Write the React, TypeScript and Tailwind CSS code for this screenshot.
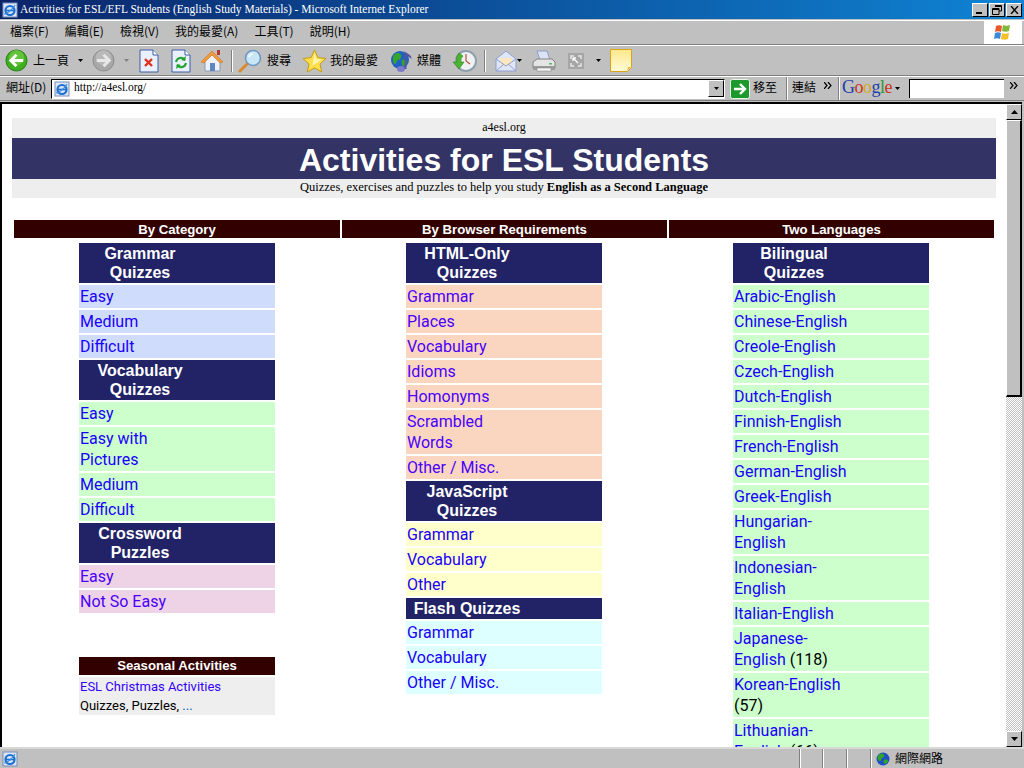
import type { ReactNode } from 'react';

const UI = "font-['Noto_Sans_CJK_TC','Liberation_Sans',sans-serif]";
const BODY = "font-['Roboto','Liberation_Sans',sans-serif]";
const ARIAL = "font-['Liberation_Sans',Arial,sans-serif]";
const SERIF = "font-['Liberation_Serif','Noto_Sans_CJK_TC',serif]";

type Row = { lines: string[]; suffix?: string; suffixOwnLine?: boolean; visited?: boolean };

const r = (text: string, extra?: Partial<Row>): Row => ({ lines: text.split('|'), ...extra });

function IeIcon({ size = 16 }: { size?: number }) {
  return (
    <svg width={size} height={size} viewBox="0 0 16 16">
      <rect x="1" y="1" width="14" height="14" fill="#dbe7f7" stroke="#7a8db5" />
      <circle cx="8" cy="8.5" r="4.5" fill="none" stroke="#1c6fd0" strokeWidth="2.2" />
      <path d="M4 8.5h8" stroke="#1c6fd0" strokeWidth="1.6" />
      <path d="M2 12c3 0 9-5 11-9" fill="none" stroke="#3d8fe0" strokeWidth="1.2" />
    </svg>
  );
}

function ArrowCircle({ dir, off }: { dir: 'left' | 'right'; off?: boolean }) {
  const d = dir === 'left' ? 'M19 12H7M12 6l-6 6 6 6' : 'M5 12h12M12 6l6 6-6 6';
  return (
    <svg width="23" height="23" viewBox="0 0 24 24">
      <circle cx="12" cy="12" r="11" fill={off ? '#a8a8a8' : '#3fae1f'} stroke={off ? '#8a8a8a' : '#1f7d12'} />
      <circle cx="12" cy="9" r="8" fill={off ? '#c4c4c4' : '#7fd14e'} opacity="0.6" />
      <path d={d} fill="none" stroke={off ? '#e8e8e8' : '#fff'} strokeWidth="3" />
    </svg>
  );
}

function DocIcon({ children }: { children: ReactNode }) {
  return (
    <svg width="20" height="24" viewBox="0 0 20 24">
      <path d="M1 1h13l5 5v17H1z" fill="#e9effb" stroke="#3f5fa8" />
      <path d="M14 1v5h5" fill="#fff" stroke="#3f5fa8" />
      {children}
    </svg>
  );
}

function HomeIcon() {
  return (
    <svg width="24" height="24" viewBox="0 0 24 24">
      <path d="M5 11v11h15V11l-7-6z" fill="#eef2f8" stroke="#8a9ab8" />
      <path d="M1 13 12 2l11 11-3 1-8-8-8 8z" fill="#ef9a3c" stroke="#c9701c" strokeWidth="0.6" />
      <rect x="17" y="1" width="3" height="5" fill="#b5392a" />
      <rect x="10" y="14" width="5" height="8" fill="#5b86c4" />
    </svg>
  );
}

function SearchIcon() {
  return (
    <svg width="24" height="24" viewBox="0 0 24 24">
      <path d="M10 14 2 22" stroke="#d98a2e" strokeWidth="3" strokeLinecap="round" />
      <circle cx="15" cy="9" r="7.5" fill="#c9e6f7" stroke="#6d97c4" strokeWidth="1.6" />
      <path d="M11 8a4 4 0 0 1 4-3" fill="none" stroke="#fff" strokeWidth="1.6" />
    </svg>
  );
}

function StarIcon() {
  return (
    <svg width="25" height="24" viewBox="0 0 25 24">
      <path d="m12.5 1 3.4 7.6 8.1.9-6 5.5 1.7 8-7.2-4.1L5.3 23 7 15 1 9.500l8.100-.9z" fill="#ffdf4a" stroke="#c79a14" />
      <path d="m12.500 4 2 6 5 .5-4 3-5 3 1-6z" fill="#fff5b0" />
    </svg>
  );
}

function MediaIcon() {
  return (
    <svg width="24" height="24" viewBox="0 0 24 24">
      <circle cx="10" cy="11" r="9" fill="#1f62c0" />
      <path d="M4 6c3-3 6-2 7 0s-1 5-3 5-1 4-3 4-3-6-1-9zM12 11c3-1 5 0 5 2s-3 5-4 4-2-5-1-6z" fill="#37a52c" />
      <ellipse cx="11" cy="20" rx="4" ry="3" fill="#7d7bc9" />
      <path d="M14.500 20V2c2 3 7 3 7 8-2-2-4-3-5-3v13z" fill="#55539e" />
    </svg>
  );
}

function HistoryIcon() {
  return (
    <svg width="25" height="24" viewBox="0 0 25 24">
      <circle cx="14" cy="12" r="10" fill="#eef2f5" stroke="#8fa0ad" strokeWidth="2" />
      <path d="M14 5v7l4 3" fill="none" stroke="#c0503a" strokeWidth="1.2" />
      <path d="M7 4a9 9 0 0 0-2 9H1l6 7 5-7H9a6 6 0 0 1 2-6z" fill="#4cb52f" stroke="#2b7f1c" strokeWidth="0.6" />
    </svg>
  );
}

function MailIcon() {
  return (
    <svg width="24" height="24" viewBox="0 0 24 24">
      <path d="M2 10 12 2l10 8v12H2z" fill="#dfe6f8" stroke="#8f9fd0" />
      <path d="M6 9h12v5l-6 4-6-4z" fill="#fbe6c2" />
      <path d="m2 10 10 7 10-7M2 22l8-7M22 22l-8-7" fill="none" stroke="#8f9fd0" />
    </svg>
  );
}

function PrintIcon() {
  return (
    <svg width="24" height="24" viewBox="0 0 24 24">
      <path d="M5 2h10l3 9H8z" fill="#dbe4f7" stroke="#8d9cc0" />
      <path d="M1 13l4-3h15l3 3v6H1z" fill="#e4e4e4" stroke="#808080" />
      <rect x="1" y="17" width="22" height="4" fill="#9a9a9a" />
      <rect x="5" y="19" width="14" height="3" fill="#f4f4f4" stroke="#808080" strokeWidth="0.5" />
      <rect x="17" y="14" width="3" height="1.500" fill="#5cb85c" />
    </svg>
  );
}

function FullIcon() {
  return (
    <svg width="16" height="16" viewBox="0 0 16 16">
      <rect width="16" height="16" fill="#a6a6a6" />
      <path d="M3 6V3h3M10 3h3v3M13 10v3h-3M6 13H3v-3" fill="none" stroke="#e8e8e8" strokeWidth="1.400" />
      <path d="M5 5l5 5M5 5h3M5 5v3" fill="none" stroke="#fff" strokeWidth="1.400" />
    </svg>
  );
}

function NoteIcon() {
  return (
    <svg width="22" height="23" viewBox="0 0 22 23">
      <defs>
        <linearGradient id="note" x1="0" y1="0" x2="0" y2="1">
          <stop offset="0" stopColor="#ffe88a" />
          <stop offset="1" stopColor="#fffbd8" />
        </linearGradient>
      </defs>
      <path d="M.5.5h21v18l-4 4H.5z" fill="url(#note)" stroke="#d9a41c" />
      <path d="m17 22 1-4h3z" fill="#e8b93a" />
    </svg>
  );
}

function Caret({ muted }: { muted?: boolean }) {
  return (
    <svg width="5" height="3" viewBox="0 0 5 3">
      <path d="M0 0h5L2.500 3z" fill={muted ? '#808080' : '#000'} />
    </svg>
  );
}

function Chevrons() {
  return (
    <svg width="8" height="7" viewBox="0 0 8 7">
      <path d="m0 0 3 3.500L0 7M4 0l3 3.500L4 7" fill="none" stroke="#000" strokeWidth="1.200" />
    </svg>
  );
}

function WinButton({ children }: { children: ReactNode }) {
  return (
    <div className="w-[16px] h-[14px] bg-[#c0c0c0] border border-t-white border-l-white border-b-black border-r-black flex items-center justify-center">
      {children}
    </div>
  );
}

function TitleBar() {
  return (
    <div className="h-[19px] flex items-center bg-gradient-to-r from-[#0a246a] to-[#0f84d4] pl-[2px] pr-[2px]">
      <IeIcon />
      <span className={`${SERIF} ml-[2px] text-[11.5px] text-white whitespace-nowrap`}>
        Activities for ESL/EFL Students (English Study Materials) - Microsoft Internet Explorer
      </span>
      <div className="ml-auto flex items-center">
        <WinButton>
          <div className="w-[6px] h-[2px] bg-black mt-[7px] -ml-[2px]" />
        </WinButton>
        <div className="w-[1px]" />
        <WinButton>
          <svg width="10" height="10" viewBox="0 0 10 10">
            <path d="M3 .5h6.500V6H7M.5 3.500H7v6H.5zM3 1.500h6.500M.5 4.500H7" fill="none" stroke="#000" />
          </svg>
        </WinButton>
        <div className="w-[1px]" />
        <WinButton>
          <svg width="9" height="8" viewBox="0 0 9 8">
            <path d="m1 0 7 8M8 0 1 8" stroke="#000" strokeWidth="1.400" />
          </svg>
        </WinButton>
      </div>
    </div>
  );
}

const MENUS = ['檔案(F)', '編輯(E)', '檢視(V)', '我的最愛(A)', '工具(T)', '說明(H)'];

function MenuBar() {
  return (
    <div className="h-[25px] mt-[1px] flex items-stretch border-t border-t-white border-b border-b-[#808080]">
      <div className={`${UI} flex-1 flex items-center gap-x-[16px] pl-[10px] pb-[4px] text-[12px] text-black`}>
        {MENUS.map((m) => (
          <span key={m} className="whitespace-nowrap">
            {m}
          </span>
        ))}
      </div>
      <div className="w-[38px] mr-[2px] bg-white flex items-center justify-center">
        <svg width="20" height="18" viewBox="0 0 20 18">
          <path d="M3 2c2-1 4-1 6 0L8 8C6 7 4 7 2 8z" fill="#e8582a" />
          <path d="M10 1c2 1 5 1 7 0l-1 6c-2 1-5 1-7 0z" fill="#7fba3a" />
          <path d="M2 9c2-1 4-1 6 0l-1 6c-2-1-4-1-6 0z" fill="#3b8ad9" />
          <path d="M9 9c2 1 4 1 7 0l-1 6c-2 1-5 1-7 0z" fill="#f5c02c" />
        </svg>
      </div>
    </div>
  );
}

function Toolbar() {
  return (
    <div className={`${UI} h-[31px] flex items-center border-t border-t-white border-b border-b-[#808080] text-[12px] text-black pl-[5px]`}>
      <ArrowCircle dir="left" />
      <span className="ml-[5px] mb-[2px] whitespace-nowrap">上一頁</span>
      <div className="ml-[9px]"><Caret /></div>
      <div className="ml-[9px]"><ArrowCircle dir="right" off /></div>
      <div className="ml-[9px]"><Caret muted /></div>
      <div className="ml-[10px]">
        <DocIcon>
          <path d="m6 10 7 7M13 10l-7 7" stroke="#e0301e" strokeWidth="2.400" />
        </DocIcon>
      </div>
      <div className="ml-[12px]">
        <DocIcon>
          <path d="M5 13a5 5 0 0 1 9-2M15 14a5 5 0 0 1-9 2" fill="none" stroke="#1fa32c" strokeWidth="2" />
          <path d="m15 7-1 5-4-1zM5 20l1-5 4 1z" fill="#1fa32c" />
        </DocIcon>
      </div>
      <div className="ml-[9px]"><HomeIcon /></div>
      <div className="ml-[7px] w-[2px] h-[22px] border-l border-l-[#808080] border-r border-r-white" />
      <div className="ml-[5px]"><SearchIcon /></div>
      <span className="ml-[5px] mb-[2px] whitespace-nowrap">搜尋</span>
      <div className="ml-[11px]"><StarIcon /></div>
      <span className="ml-[3px] mb-[2px] whitespace-nowrap">我的最愛</span>
      <div className="ml-[12px]"><MediaIcon /></div>
      <span className="ml-[3px] mb-[2px] whitespace-nowrap">媒體</span>
      <div className="ml-[11px]"><HistoryIcon /></div>
      <div className="ml-[7px] w-[2px] h-[22px] border-l border-l-[#808080] border-r border-r-white" />
      <div className="ml-[8px]"><MailIcon /></div>
      <div className="ml-[-1px]"><Caret /></div>
      <div className="ml-[10px]"><PrintIcon /></div>
      <div className="ml-[12px]"><FullIcon /></div>
      <div className="ml-[12px]"><Caret /></div>
      <div className="ml-[9px]"><NoteIcon /></div>
    </div>
  );
}

function AddressBar() {
  return (
    <div className={`${UI} h-[25px] flex items-center border-t border-t-white border-b border-b-[#808080] text-[12px] text-black`}>
      <span className="ml-[6px] mb-[4px] w-[45px] whitespace-nowrap">網址(D)</span>
      <div className="w-[674px] h-[20px] flex items-center bg-white border-t border-l border-t-black border-l-black border-b border-r border-b-white border-r-white">
        <div className="ml-[2px]"><IeIcon /></div>
        <span className={`${SERIF} ml-[4px] mb-[2px] text-[11.5px]`}>http://a4esl.org/</span>
        <div className="ml-auto w-[16px] h-[17px] bg-[#c0c0c0] border border-t-white border-l-white border-b-black border-r-black flex items-center justify-center">
          <Caret />
        </div>
      </div>
      <div className="ml-[5px]">
        <svg width="20" height="20" viewBox="0 0 20 20">
          <rect x="0.500" y="0.500" width="19" height="19" rx="2" fill="#1d9a2e" stroke="#e8f5e8" />
          <path d="M4 10h11M10 5l5 5-5 5" fill="none" stroke="#fff" strokeWidth="2.400" />
        </svg>
      </div>
      <span className="ml-[3px] mb-[4px] whitespace-nowrap">移至</span>
      <div className="ml-[9px] w-[2px] h-[23px] border-l border-l-[#808080] border-r border-r-white" />
      <span className="ml-[4px] mb-[4px] whitespace-nowrap">連結</span>
      <div className="ml-[8px] mb-[6px]"><Chevrons /></div>
      <div className="ml-[6px] w-[2px] h-[23px] border-l border-l-[#808080] border-r border-r-white" />
      <span className={`${SERIF} ml-[2px] mb-[3px] text-[18px] leading-[20px] tracking-[-0.5px]`}>
        <span className="text-[#1b3fa8]">G</span>
        <span className="text-[#c8341c]">o</span>
        <span className="text-[#d8a818]">o</span>
        <span className="text-[#1b3fa8]">g</span>
        <span className="text-[#2a9a3a]">l</span>
        <span className="text-[#c8341c]">e</span>
      </span>
      <div className="ml-[3px]"><Caret /></div>
      <div className="ml-[9px] w-[95px] h-[19px] bg-white border-t border-l border-t-black border-l-black" />
      <div className="ml-[6px] mb-[6px]"><Chevrons /></div>
    </div>
  );
}

function ScrollButton({ up }: { up?: boolean }) {
  return (
    <div className="h-[16px] bg-[#c0c0c0] border border-t-white border-l-white border-b-black border-r-black flex items-center justify-center">
      <svg width="7" height="4" viewBox="0 0 7 4">
        <path d={up ? 'M0 4h7L3.500 0z' : 'M0 0h7L3.500 4z'} fill="#000" />
      </svg>
    </div>
  );
}

function Scrollbar() {
  return (
    <div className="w-[16px] flex flex-col">
      <ScrollButton up />
      <div className="h-[277px] bg-[#c0c0c0] border-t border-l border-t-white border-l-white border-b-2 border-r-2 border-b-black border-r-black" />
      <div className="flex-1 bg-[repeating-conic-gradient(#ffffff_0_25%,#c0c0c0_0_50%)] bg-[length:2px_2px]" />
      <ScrollButton />
    </div>
  );
}

function SectionHeader({ lines }: { lines: string[] }) {
  return (
    <div className={`${ARIAL} bg-[#222266] text-white font-bold text-[16px] leading-[19px] py-[1px]`}>
      <div className="w-[122px] text-center">
        {lines.map((l) => (
          <div key={l}>{l}</div>
        ))}
      </div>
    </div>
  );
}

function LinkRow({ row, bg }: { row: Row; bg: string }) {
  const link = row.visited ? 'text-[#4a00ff]' : 'text-[#1a00ff]';
  return (
    <div className={`${BODY} ${bg} px-[1px] py-[1px] text-[16px] leading-[21px] whitespace-nowrap`}>
      {row.lines.map((l, i) => (
        <div key={l} className={link}>
          {l}
          {i === row.lines.length - 1 && row.suffix && !row.suffixOwnLine && (
            <span className="text-black"> {row.suffix}</span>
          )}
        </div>
      ))}
      {row.suffix && row.suffixOwnLine && <div className="text-black">{row.suffix}</div>}
    </div>
  );
}

function Group({ title, rows, bg }: { title: string; rows: Row[]; bg: string }) {
  return (
    <>
      <SectionHeader lines={title.split('|')} />
      {rows.map((row) => (
        <LinkRow key={row.lines.join(' ')} row={row} bg={bg} />
      ))}
    </>
  );
}

const V = { visited: true };

function CategoryColumn() {
  return (
    <div className="w-[196px] flex flex-col gap-[2px]">
      <Group title="Grammar|Quizzes" bg="bg-[#cfdcfb]" rows={[r('Easy'), r('Medium'), r('Difficult')]} />
      <Group
        title="Vocabulary|Quizzes"
        bg="bg-[#ccffcc]"
        rows={[r('Easy'), r('Easy with|Pictures'), r('Medium'), r('Difficult')]}
      />
      <Group title="Crossword|Puzzles" bg="bg-[#eed2e6]" rows={[r('Easy', V), r('Not So Easy', V)]} />
      <div className={`${ARIAL} mt-[42px] h-[18px] bg-[#330000] text-white font-bold text-[13.2px] leading-[18px] text-center`}>
        Seasonal Activities
      </div>
      <div className={`${BODY} bg-[#eeeeee] px-[1px] h-[38px] text-[13px] leading-[19px]`}>
        <div className="text-[#3300ff]">ESL Christmas Activities</div>
        <div className="text-black">
          Quizzes, Puzzles, <span className="text-[#0060c0]">...</span>
        </div>
      </div>
    </div>
  );
}

function BrowserColumn() {
  return (
    <div className="w-[196px] flex flex-col gap-[2px]">
      <Group
        title="HTML-Only|Quizzes"
        bg="bg-[#fad6c0]"
        rows={[
          r('Grammar', V),
          r('Places', V),
          r('Vocabulary', V),
          r('Idioms', V),
          r('Homonyms', V),
          r('Scrambled|Words', V),
          r('Other / Misc.', V),
        ]}
      />
      <Group title="JavaScript|Quizzes" bg="bg-[#ffffcc]" rows={[r('Grammar'), r('Vocabulary'), r('Other')]} />
      <Group title="Flash Quizzes" bg="bg-[#ddffff]" rows={[r('Grammar'), r('Vocabulary'), r('Other / Misc.')]} />
    </div>
  );
}

function LanguageColumn() {
  return (
    <div className="w-[196px] flex flex-col gap-[2px]">
      <Group
        title="Bilingual|Quizzes"
        bg="bg-[#ccffcc]"
        rows={[
          r('Arabic-English'),
          r('Chinese-English'),
          r('Creole-English'),
          r('Czech-English'),
          r('Dutch-English'),
          r('Finnish-English'),
          r('French-English'),
          r('German-English'),
          r('Greek-English'),
          r('Hungarian-|English'),
          r('Indonesian-|English'),
          r('Italian-English'),
          r('Japanese-|English', { suffix: '(118)' }),
          r('Korean-English', { suffix: '(57)', suffixOwnLine: true }),
          r('Lithuanian-|English', { suffix: '(66)' }),
        ]}
      />
    </div>
  );
}

const COLUMNS = [
  { title: 'By Category', body: <CategoryColumn />, inner: 'mt-[5px]' },
  { title: 'By Browser Requirements', body: <BrowserColumn />, inner: 'mt-[5px] mr-[1px]' },
  { title: 'Two Languages', body: <LanguageColumn />, inner: 'mt-[5px] mr-[1px]' },
];

function Page() {
  return (
    <div className="flex-1 min-w-0 bg-white pl-[10px] pr-[10px] pt-[14px] overflow-hidden">
      <div className="bg-[#eeeeee]">
        <div className={`${SERIF} h-[20px] text-center text-[12px] leading-[19px] text-black`}>a4esl.org</div>
        <div className={`${ARIAL} h-[41px] bg-[#333366] text-center text-white font-bold text-[32px] leading-[44px]`}>
          Activities for ESL Students
        </div>
        <div className={`${SERIF} h-[19px] text-center text-[12.5px] leading-[16px] text-black`}>
          Quizzes, exercises and puzzles to help you study <b>English as a Second Language</b>
        </div>
      </div>
      <div className="mt-[22px] px-[2px] grid grid-cols-[326px_325px_325px] gap-x-[2px]">
        {COLUMNS.map((c) => (
          <div key={c.title} className="flex flex-col items-center">
            <div className={`${ARIAL} self-stretch h-[18px] bg-[#330000] text-white font-bold text-[13.2px] leading-[19px] text-center`}>
              {c.title}
            </div>
            <div className={c.inner}>{c.body}</div>
          </div>
        ))}
      </div>
    </div>
  );
}

function StatusBar() {
  return (
    <div className={`${UI} h-[21px] flex items-center border-t-2 border-t-[#d8d8d8] text-[12px] text-black`}>
      <div className="ml-[2px]"><IeIcon /></div>
      <div className="ml-[781px] w-[2px] h-[19px] border-l border-l-[#808080] border-r border-r-white" />
      <div className="ml-[21px] w-[2px] h-[19px] border-l border-l-[#808080] border-r border-r-white" />
      <div className="ml-[22px] w-[2px] h-[19px] border-l border-l-[#808080] border-r border-r-white" />
      <div className="ml-[22px] w-[2px] h-[19px] border-l border-l-[#808080] border-r border-r-white" />
      <svg className="ml-[4px]" width="14" height="14" viewBox="0 0 14 14">
        <circle cx="7" cy="7" r="6.500" fill="#1f4fc0" />
        <path d="M2 4c2-3 5-3 6-1s-1 3-2 3 0 3-2 3-3-3-2-5zM8 8c2-1 4 0 4 1s-2 3-3 3-2-3-1-4z" fill="#2fa52c" />
      </svg>
      <span className="ml-[5px] mb-[2px] whitespace-nowrap">網際網路</span>
    </div>
  );
}

export default function App() {
  return (
    <div className="w-[1024px] h-[768px] overflow-hidden bg-[#c0c0c0] flex flex-col">
      <TitleBar />
      <MenuBar />
      <Toolbar />
      <AddressBar />
      <div className="h-[645px] flex border-t-2 border-l-2 border-t-black border-l-black mt-[1px] mr-[2px] overflow-hidden">
        <Page />
        <Scrollbar />
      </div>
      <StatusBar />
    </div>
  );
}
